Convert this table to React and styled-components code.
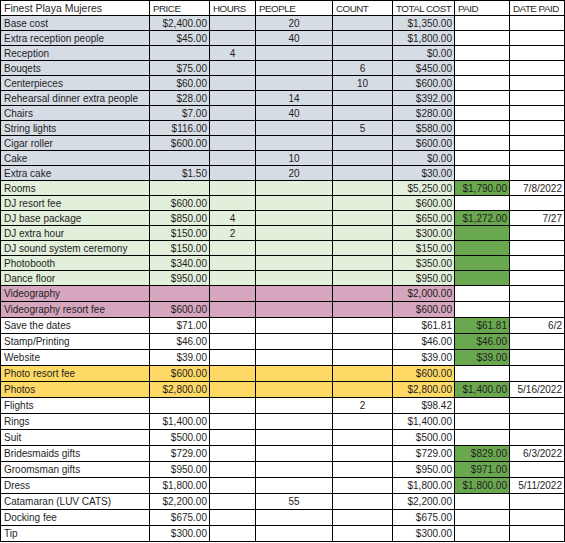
import React from "react"
import styled, { createGlobalStyle } from 'styled-components';

const fills = {
  gray: '#d6dce4',
  green: '#e2efda',
  pink: '#d5a6bd',
  yellow: '#ffd966',
  paid: '#6aa84f',
  none: '#ffffff'
}

const rows = [
  ['Base cost', '$2,400.00', '', '20', '', '$1,350.00', '', '', 'gray'],
  ['Extra reception people', '$45.00', '', '40', '', '$1,800.00', '', '', 'gray'],
  ['Reception', '', '4', '', '', '$0.00', '', '', 'gray'],
  ['Bouqets', '$75.00', '', '', '6', '$450.00', '', '', 'gray'],
  ['Centerpieces', '$60.00', '', '', '10', '$600.00', '', '', 'gray'],
  ['Rehearsal dinner extra people', '$28.00', '', '14', '', '$392.00', '', '', 'gray'],
  ['Chairs', '$7.00', '', '40', '', '$280.00', '', '', 'gray'],
  ['String lights', '$116.00', '', '', '5', '$580.00', '', '', 'gray'],
  ['Cigar roller', '$600.00', '', '', '', '$600.00', '', '', 'gray'],
  ['Cake', '', '', '10', '', '$0.00', '', '', 'gray'],
  ['Extra cake', '$1.50', '', '20', '', '$30.00', '', '', 'gray'],
  ['Rooms', '', '', '', '', '$5,250.00', '$1,790.00', '7/8/2022', 'green', true],
  ['DJ resort fee', '$600.00', '', '', '', '$600.00', '', '', 'green'],
  ['DJ base package', '$850.00', '4', '', '', '$650.00', '$1,272.00', '7/27', 'green', true],
  ['DJ extra hour', '$150.00', '2', '', '', '$300.00', '', '', 'green', true],
  ['DJ sound system ceremony', '$150.00', '', '', '', '$150.00', '', '', 'green', true],
  ['Photobooth', '$340.00', '', '', '', '$350.00', '', '', 'green', true],
  ['Dance floor', '$950.00', '', '', '', '$950.00', '', '', 'green', true],
  ['Videography', '', '', '', '', '$2,000.00', '', '', 'pink'],
  ['Videography resort fee', '$600.00', '', '', '', '$600.00', '', '', 'pink'],
  ['Save the dates', '$71.00', '', '', '', '$61.81', '$61.81', '6/2', 'none', true],
  ['Stamp/Printing', '$46.00', '', '', '', '$46.00', '$46.00', '', 'none', true],
  ['Website', '$39.00', '', '', '', '$39.00', '$39.00', '', 'none', true],
  ['Photo resort fee', '$600.00', '', '', '', '$600.00', '', '', 'yellow'],
  ['Photos', '$2,800.00', '', '', '', '$2,800.00', '$1,400.00', '5/16/2022', 'yellow', true],
  ['Flights', '', '', '', '2', '$98.42', '', '', 'none'],
  ['Rings', '$1,400.00', '', '', '', '$1,400.00', '', '', 'none'],
  ['Suit', '$500.00', '', '', '', '$500.00', '', '', 'none'],
  ['Bridesmaids gifts', '$729.00', '', '', '', '$729.00', '$829.00', '6/3/2022', 'none', true],
  ['Groomsman gifts', '$950.00', '', '', '', '$950.00', '$971.00', '', 'none', true],
  ['Dress', '$1,800.00', '', '', '', '$1,800.00', '$1,800.00', '5/11/2022', 'none', true],
  ['Catamaran (LUV CATS)', '$2,200.00', '', '55', '', '$2,200.00', '', '', 'none'],
  ['Docking fee', '$675.00', '', '', '', '$675.00', '', '', 'none'],
  ['Tip', '$300.00', '', '', '', '$300.00', '', '', 'none']
]

const headers = ['Finest Playa Mujeres', 'PRICE', 'HOURS', 'PEOPLE', 'COUNT', 'TOTAL COST', 'PAID', 'DATE PAID']

// alignment per column for body cells
const aligns = ['left', 'right', 'center', 'center', 'center', 'right', 'right', 'right']

function App(){
  return (
    <>
      <Global />
      <Sheet>
        {headers.map((h, i) => (
          <HeadCell key={'h' + i} $align="left" $fill="none" $caps={i > 0}>{h}</HeadCell>
        ))}
        {rows.map((r, ri) => {
          const tone = r[8]
          const paidGreen = r[9]
          return r.slice(0, 8).map((v, ci) => {
            let fill = ci < 6 ? tone : 'none'
            if (ci === 6 && paidGreen) fill = 'paid'
            return (
              <Cell key={ri + '-' + ci} $align={aligns[ci]} $fill={fill}>{v}</Cell>
            )
          })
        })}
      </Sheet>
    </>
  )
};

const Global = createGlobalStyle`
    body{
        margin:0;
        background:#ffffff;
    }
`

const Sheet = styled.div`
    display:grid;
    grid-template-columns: 148px 59px 45px 76px 59px 61px 54px 54px;
    grid-template-rows: repeat(19, 14px) repeat(16, 15px);
    gap:1px;
    padding:1px;
    width:565px;
    box-sizing:border-box;
    background:#000;
    font-family: 'Liberation Sans', Arial, sans-serif;
    font-size:10px;
    color:#1e1e1e;
`

const Cell = styled.div`
    background:${p => fills[p.$fill]};
    text-align:${p => p.$align};
    padding:${p => p.$align === 'left' ? '0 3px' : '0 2px'};
    line-height:15px;
    white-space:nowrap;
    overflow:hidden;
`

const HeadCell = styled(Cell)`
    font-size:${p => p.$caps ? '9.8px' : '10.5px'};
    letter-spacing:${p => p.$caps ? '-0.5px' : '0'};
    color:#2a2a2a;
`

export default App;
